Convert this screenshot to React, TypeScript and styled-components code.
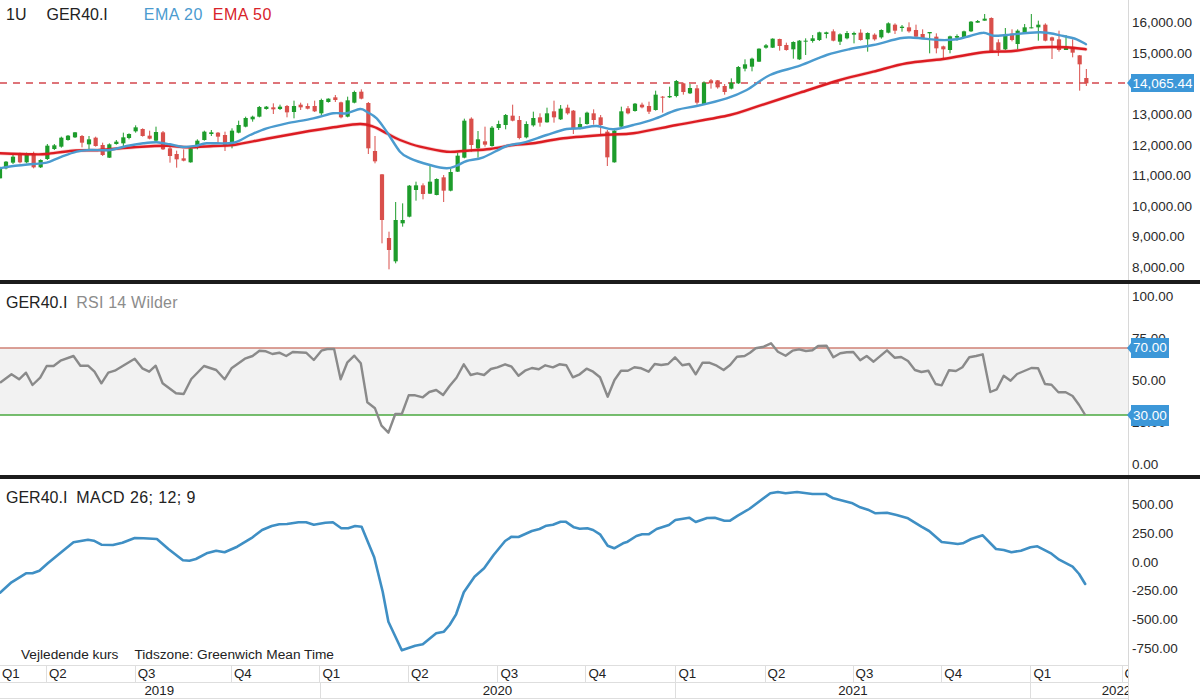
import React from "react";
import styled, { createGlobalStyle } from "styled-components";

const GlobalStyle = createGlobalStyle`
  html, body { margin: 0; padding: 0; background: #fff; }
  body { font-family: "Liberation Sans", Arial, sans-serif; color: #222; }
`;

const CHART_W = 1128;
const BLUE = "#4b9bcf";
const RED = "#dc1c22";
const UP = "#1d9c2b";
const DOWN = "#d94f4b";

type Pt = [number, number];
type Candle = [number, number, number, number, number, number];

// Candles read from the reference: x, rising?, wick top, body top, body bottom, wick bottom (at 3x)
const candleGroups: { off: number; rows: Candle[] }[] = [
  { off: 0, rows: [
    [0,1,500,505,535,535],[18,1,483,485,505,508],[39,1,465,470,488,492],[60,0,458,462,487,490],[80,1,458,462,487,490],[101,0,455,462,502,505],[122,1,478,480,502,504],[142,1,432,437,477,480],[163,1,432,436,447,450],[184,1,410,413,440,443],[204,1,405,407,420,422],[225,1,396,397,412,414],[246,0,405,408,428,442],[267,1,408,418,433,450],[287,0,410,413,438,440],[308,0,428,435,465,468],[328,1,430,433,473,474],[349,1,420,425,432,434],[370,1,398,412,430,438],[387,1,400,402,414,418],[407,1,376,382,394,398],[428,0,385,387,408,410],[449,0,392,407,416,418],[468,1,380,396,422,424],[489,0,393,397,448,450],[510,0,440,445,468,488],[530,0,452,462,478,503],[551,0,448,475,482,484],[572,1,442,445,487,488],[592,1,418,422,436,448],[613,1,392,395,420,422],[634,1,390,397,402,408],[654,0,396,398,410,432],[675,0,395,405,438,453],[696,1,385,392,427,445],[716,1,362,375,398,400],[737,1,350,354,380,382],[758,1,347,350,358,365],[778,1,318,321,350,352],[799,1,318,320,327,329],[820,0,310,322,328,342],[840,1,314,320,327,330],[861,0,315,318,337,352],[882,1,302,318,336,355],[902,0,308,314,322,330],[923,0,310,318,326,328],[944,0,302,318,334,336],[964,1,296,300,340,347],[985,1,295,296,306,308],[1006,0,285,292,300,306],[1023,0,305,307,352,355],[1043,1,290,301,350,352],[1063,1,272,276,308,310],[1084,0,268,275,296,298],[1105,0,306,309,445,462],[1125,0,408,453,484,490],[1146,0,522,523,660,730],[1167,0,695,714,750,808],[1187,1,606,660,784,790],
  ]},
  { off: 1200, rows: [
    [8,1,610,660,670,680],[28,1,555,557,650,652],[48,1,545,556,570,602],[69,0,550,556,582,598],[90,1,495,545,581,582],[110,1,535,537,585,586],[131,0,525,532,572,606],[152,1,505,516,572,574],[173,1,458,467,515,516],[193,1,356,362,473,475],[214,0,352,356,435,455],[234,1,393,418,445,473],[255,0,380,424,434,440],[276,1,378,383,438,440],[296,1,362,372,384,390],[317,1,342,345,375,388],[338,0,314,347,362,364],[358,0,348,360,414,418],[379,1,364,372,412,415],[400,1,335,354,376,380],[420,0,340,352,368,380],[441,1,323,340,367,368],[462,0,302,334,352,368],[482,1,315,326,358,360],[503,0,314,323,340,344],[520,0,330,332,388,402],[540,1,352,372,385,388],[561,1,335,338,372,374],[581,0,328,340,360,374],[602,0,345,352,375,402],[622,0,390,395,472,498],[643,1,390,392,487,488],[664,1,320,334,380,384],[684,0,318,325,340,343],[705,1,309,311,333,335],[726,0,308,314,322,325],[747,0,305,318,335,342],[767,1,272,284,330,332],[788,0,288,290,292,338],[809,1,260,288,292,294],[829,1,240,243,288,292],[850,0,248,250,276,284],[870,1,252,264,280,282],[891,0,255,265,308,314],[912,1,244,248,312,314],[933,0,237,241,250,266],[953,0,240,241,262,266],[974,0,252,258,276,284],[994,1,235,248,266,268],[1015,1,198,201,250,252],[1035,1,178,193,206,214],[1056,1,173,176,200,214],[1077,1,145,146,185,186],[1098,1,132,136,143,146],[1118,1,115,116,143,144],[1139,0,116,117,138,152],[1159,0,128,135,150,152],[1180,1,124,126,148,176],[1198,1,120,122,178,180],
  ]},
  { off: 2400, rows: [
    [17,1,115,122,125,165],[38,1,105,115,123,128],[58,1,95,97,120,123],[79,1,95,97,102,115],[100,0,88,94,122,124],[120,1,100,103,125,135],[141,1,93,99,115,118],[162,1,95,99,104,130],[182,0,88,98,120,122],[203,1,97,99,118,155],[224,0,100,104,118,122],[244,1,88,90,112,116],[265,1,67,70,98,100],[285,0,70,74,92,102],[306,1,75,80,84,95],[327,0,67,82,94,98],[348,0,74,90,110,113],[368,0,88,102,114,116],[389,1,96,96,100,160],[409,0,100,110,145,160],[430,0,137,139,148,176],[450,1,107,109,150,160],[471,1,103,108,113,122],[492,1,92,94,112,114],[513,1,63,65,94,96],[533,1,60,63,68,68],[554,1,42,56,62,62],[574,0,52,54,154,158],[595,0,118,127,150,168],[616,1,84,108,148,150],[636,0,88,101,120,124],[653,1,88,92,132,148],[674,1,72,82,98,100],[694,1,42,82,84,85],[715,1,62,74,82,122],[736,0,70,74,122,124],[756,0,110,112,122,177],[777,0,92,118,150,155],[798,1,105,142,150,150],[818,0,118,142,158,172],[839,0,165,166,193,272],[859,0,207,234,250,258],
  ]},
];

const ema20: Pt[] = [
  [0,505],[40,498],[100,492],[140,488],[180,472],[230,455],[270,450],[330,450],[380,438],[430,430],[470,427],[510,433],[550,441],[590,437],[620,430],[700,428],[750,405],[800,385],[860,370],[940,355],[1000,340],[1040,340],[1080,327],[1100,335],[1130,355],[1160,395],[1200,455],
  [1230,475],[1290,495],[1340,505],[1370,497],[1400,483],[1450,472],[1520,438],[1570,428],[1640,405],[1700,387],[1740,385],[1790,378],[1840,388],[1900,375],[1960,358],[2030,330],[2090,318],[2180,295],[2240,270],[2310,225],[2400,197],
  [2480,165],[2550,147],[2620,135],[2700,115],[2740,113],[2820,120],[2870,118],[2910,108],[2950,98],[2980,107],[3020,105],[3120,97],[3190,108],[3230,118],[3258,133],
];

const ema50: Pt[] = [
  [0,460],[100,463],[140,462],[220,452],[300,450],[400,442],[500,437],[560,442],[640,438],[700,435],[800,416],[900,398],[1000,382],[1080,372],[1120,380],[1160,400],[1200,420],
  [1260,440],[1340,455],[1400,452],[1470,447],[1540,435],[1600,430],[1690,415],[1820,404],[1900,400],[2030,375],[2190,345],[2270,320],[2400,278],
  [2520,240],[2620,215],[2720,190],[2830,177],[2950,157],[3040,153],[3120,142],[3200,142],[3257,148],
];

const rsiLeft: Pt[] = [[0,308],[30,283],[50,298],[68,278],[85,315],[105,293],[122,258],[140,258],[158,242],[192,228],[210,257],[230,257],[247,275],[265,310],[283,278],[300,272],[352,236],[372,265],[390,275],[407,257],[425,310],[460,340],[480,342],[500,297],[533,258],[565,270],[587,298],[605,265],[640,236],[660,228],[678,212],[695,214],[712,222],[730,218],[748,228],[765,216],[800,218],[820,240],[840,212],[855,207],[873,207],[890,298],[908,247],[926,227],[943,250],[960,367],[980,385],[997,437],[1015,458],[1033,402],[1050,402],[1068,346],[1085,346],[1105,352],[1122,336],[1140,330],[1158,345],[1175,318],[1193,293],[1212,253],[1230,285],[1247,280],[1265,285],[1283,267],[1300,262],[1320,253],[1337,260],[1355,287],[1372,272],[1390,264],[1408,268],[1425,256],[1445,262],[1462,253],[1480,256],[1497,292],[1515,283],[1533,266],[1550,275],[1568,292]];
const rsiRight: Pt[] = [[20,350],[38,300],[55,272],[73,272],[90,262],[108,265],[127,275],[143,252],[160,255],[178,252],[196,232],[215,256],[233,252],[250,283],[268,248],[285,248],[305,257],[323,270],[340,255],[358,230],[378,228],[392,218],[407,205],[428,200],[447,190],[465,215],[485,227],[503,212],[520,208],[538,213],[555,211],[570,198],[592,197],[610,232],[628,220],[645,217],[662,216],[680,241],[697,228],[715,245],[750,211],[770,233],[787,231],[805,243],[823,270],[840,276],[858,272],[877,312],[893,316],[912,271],[930,273],[947,262],[965,232],[983,228],[1000,223],[1020,336],[1037,328],[1055,287],[1073,302],[1090,282],[1127,264],[1145,265],[1163,312],[1180,314],[1198,337],[1217,337],[1235,348],[1252,375],[1268,405]];

const macdLeft: Pt[] = [[0,353],[30,322],[68,295],[85,295],[103,287],[125,265],[160,232],[192,202],[230,194],[245,197],[265,209],[295,210],[320,203],[352,189],[375,190],[410,192],[440,222],[478,256],[495,257],[512,252],[540,235],[565,227],[587,232],[620,215],[660,187],[685,165],[710,153],[730,148],[750,147],[780,142],[800,142],[820,149],[850,143],[870,142],[892,160],[910,160],[928,153],[945,155],[978,247],[1000,350],[1015,440],[1050,526],[1085,512],[1105,508],[1140,475],[1160,470],[1175,450],[1192,418],[1212,352],[1240,305],[1265,280],[1290,240],[1320,198],[1337,185],[1355,186],[1390,168],[1410,162],[1428,152],[1445,149],[1465,140],[1478,140],[1500,157],[1515,161],[1535,160],[1550,165],[1568,178]];
const macdRight: Pt[] = [[20,212],[37,220],[60,205],[72,200],[95,183],[110,178],[127,178],[148,162],[180,150],[197,135],[233,128],[250,141],[280,129],[300,128],[325,137],[340,137],[360,122],[390,102],[445,55],[465,51],[485,55],[515,51],[555,57],[590,57],[610,70],[660,85],[680,97],[700,104],[720,115],[750,113],[775,120],[805,130],[840,155],[860,168],[893,201],[915,204],[935,207],[948,205],[970,192],[1000,181],[1035,222],[1055,225],[1075,232],[1100,227],[1125,217],[1143,214],[1180,236],[1200,254],[1235,275],[1252,297],[1268,327]];

const ZX = 600 / 1568;
const fromCrops = (left: Pt[], right: Pt[], top: number): string =>
  [...left.map(([x, y]): Pt => [x * ZX, y / 3]), ...right.map(([x, y]): Pt => [600 + x * ZX, y / 3])]
    .map(([x, y]) => `${x.toFixed(1)},${(y + top).toFixed(1)}`)
    .join(" ");

// Catmull-Rom through the points, so the averages read as smooth curves
const smooth = (pts: Pt[]): string => {
  const p = pts.map(([x, y]): Pt => [x / 3, y / 3]);
  let d = `M${p[0][0].toFixed(1)} ${p[0][1].toFixed(1)}`;
  for (let i = 0; i < p.length - 1; i++) {
    const a = p[Math.max(i - 1, 0)], b = p[i], c = p[i + 1], e = p[Math.min(i + 2, p.length - 1)];
    d += `C${(b[0] + (c[0] - a[0]) / 6).toFixed(1)} ${(b[1] + (c[1] - a[1]) / 6).toFixed(1)} ${(c[0] - (e[0] - b[0]) / 6).toFixed(1)} ${(c[1] - (e[1] - b[1]) / 6).toFixed(1)} ${c[0].toFixed(1)} ${c[1].toFixed(1)}`;
  }
  return d;
};

const Page = styled.div`
  width: 1200px;
  height: 700px;
  display: flex;
  flex-direction: column;
  overflow: hidden;
  background: #fff;
`;

const Pane = styled.section<{ $h: number }>`
  height: ${(p) => p.$h}px;
  flex: none;
  display: flex;
`;

const Divider = styled.div`
  height: 4px;
  flex: none;
  background: #1c1c1c;
`;

const ChartArea = styled.div`
  position: relative;
  width: ${CHART_W}px;
  flex: none;
  display: flex;
  flex-direction: column;
`;

const Plot = styled.svg`
  display: block;
  flex: 1;
  width: ${CHART_W}px;
  min-height: 0;
  overflow: hidden;
`;

const Legend = styled.div<{ $top: number }>`
  position: absolute;
  left: 6px;
  top: ${(p) => p.$top}px;
  display: flex;
  align-items: center;
  font-size: 16px;
  line-height: 18px;
  white-space: nowrap;
  pointer-events: none;
`;

const LegendItem = styled.span<{ $color?: string; $gap?: number; $track?: number }>`
  color: ${(p) => p.$color ?? "#222"};
  margin-right: ${(p) => p.$gap ?? 0}px;
  letter-spacing: ${(p) => p.$track ?? 0}px;
`;

const Axis = styled.div<{ $pt: number; $pb: number }>`
  position: relative;
  flex: 1;
  display: flex;
  flex-direction: column;
  justify-content: space-between;
  padding: ${(p) => p.$pt}px 0 ${(p) => p.$pb}px 3px;
  border-left: 1px solid #d8d8d8;
`;

const Tick = styled.div`
  font-size: 13.5px;
  line-height: 16px;
  height: 16px;
  color: #2a2a2a;
  white-space: nowrap;
`;

const PriceTag = styled.div<{ $top: number; $w: number; $h: number }>`
  position: absolute;
  left: 2px;
  top: ${(p) => p.$top}px;
  width: ${(p) => p.$w}px;
  height: ${(p) => p.$h}px;
  display: flex;
  align-items: center;
  justify-content: center;
  background: #3c97d8;
  color: #fff;
  font-size: 13.5px;
  white-space: nowrap;

  &::before {
    content: "";
    position: absolute;
    left: -4px;
    top: 50%;
    margin-top: -5px;
    border-top: 5px solid transparent;
    border-bottom: 5px solid transparent;
    border-right: 4px solid #3c97d8;
  }
`;

const Footnote = styled.div`
  position: absolute;
  left: 21px;
  top: 168px;
  display: flex;
  gap: 16px;
  font-size: 13.7px;
  line-height: 16px;
  color: #222;
  white-space: nowrap;
`;

const TimeAxis = styled.div`
  flex: none;
  box-sizing: border-box;
  height: 34px;
  margin-bottom: 1px;
  display: flex;
  flex-direction: column;
  border-top: 1px solid #dedede;
  border-bottom: 1px solid #dedede;
  overflow: hidden;
`;

const TimeRow = styled.div`
  flex: 1;
  display: flex;
  min-height: 0;

  & + & {
    border-top: 1px solid #dedede;
  }
`;

const TimeCell = styled.div<{ $w: number; $center?: boolean; $first?: boolean }>`
  flex: none;
  width: ${(p) => p.$w}px;
  box-sizing: border-box;
  padding: ${(p) => (p.$center ? "0 1px 0 0" : "0 0 0 2px")};
  border-left: ${(p) => (p.$first ? "0" : "1px solid #dedede")};
  font-size: 13.3px;
  line-height: 16px;
  color: #222;
  text-align: ${(p) => (p.$center ? "center" : "left")};
  white-space: nowrap;
`;

const Candles = () => (
  <g>
    {candleGroups.flatMap(({ off, rows }) =>
      rows.map(([x, rising, wt, bt, bb, wb]) => {
        const cx = (x + off) / 3;
        const color = rising ? UP : DOWN;
        return (
          <g key={x + off}>
            <line x1={cx} x2={cx} y1={wt / 3} y2={wb / 3} stroke={color} strokeWidth={1} />
            <rect x={cx - 2.1} y={bt / 3} width={4.2} height={Math.max((bb - bt) / 3, 1)} fill={color} />
          </g>
        );
      })
    )}
  </g>
);

const PriceChart = () => (
  <Plot viewBox={`0 0 ${CHART_W} 280`} aria-hidden>
    <line x1={0} x2={CHART_W} y1={83} y2={83} stroke="#d4474e" strokeWidth={1.3} strokeDasharray="7 6" />
    <Candles />
    <path d={smooth(ema50)} fill="none" stroke={RED} strokeOpacity={0.2} strokeWidth={3.8} strokeLinecap="round" />
    <path d={smooth(ema50)} fill="none" stroke={RED} strokeWidth={2.4} strokeLinecap="round" />
    <path d={smooth(ema20)} fill="none" stroke={BLUE} strokeWidth={2.4} strokeLinecap="round" />
  </Plot>
);

const RsiChart = () => (
  <Plot viewBox={`0 0 ${CHART_W} 191`} aria-hidden>
    <rect x={0} y={64} width={CHART_W} height={67} fill="#f2f2f2" />
    <line x1={0} x2={CHART_W} y1={64} y2={64} stroke="#cf8174" strokeWidth={1.4} />
    <line x1={0} x2={CHART_W} y1={131} y2={131} stroke="#4aa83f" strokeWidth={1.4} />
    <polyline
      points={fromCrops(rsiLeft, rsiRight, -4)}
      fill="none"
      stroke="#8a8a8a"
      strokeWidth={2.4}
      strokeLinejoin="round"
    />
  </Plot>
);

const MacdChart = () => (
  <Plot viewBox={`0 0 ${CHART_W} 186`} aria-hidden>
    <polyline
      points={fromCrops(macdLeft, macdRight, -4)}
      fill="none"
      stroke="#3f8fc4"
      strokeWidth={2.6}
      strokeLinejoin="round"
      strokeLinecap="round"
    />
  </Plot>
);

const quarters: [string, number][] = [
  ["Q1", 46], ["Q2", 88.7], ["Q3", 96.3], ["Q4", 88.5], ["Q1", 88.5], ["Q2", 89.5], ["Q3", 88],
  ["Q4", 89.9], ["Q1", 89.2], ["Q2", 88], ["Q3", 88.8], ["Q4", 89.1], ["Q1", 91.1], ["Q2", 40],
];
const years: [string, number][] = [["2019", 319.5], ["2020", 355.9], ["2021", 355.1], ["2022", 172]];

const priceTicks = ["16,000.00", "15,000.00", "14,000.00", "13,000.00", "12,000.00", "11,000.00", "10,000.00", "9,000.00", "8,000.00"];
const rsiTicks = ["100.00", "75.00", "50.00", "25.00", "0.00"];
const macdTicks = ["500.00", "250.00", "0.00", "-250.00", "-500.00", "-750.00"];

export default function App() {
  return (
    <Page>
      <GlobalStyle />
      <Pane $h={280}>
        <ChartArea>
          <PriceChart />
          <Legend $top={6}>
            <LegendItem $gap={20}>1U</LegendItem>
            <LegendItem $gap={36}>GER40.I</LegendItem>
            <LegendItem $color="#4b9bcf" $gap={10} $track={0.5}>EMA 20</LegendItem>
            <LegendItem $color="#d8232a" $track={0.5}>EMA 50</LegendItem>
          </Legend>
        </ChartArea>
        <Axis $pt={15} $pb={4}>
          {priceTicks.map((t) => <Tick key={t}>{t}</Tick>)}
          <PriceTag $top={74} $w={63} $h={18}>14,065.44</PriceTag>
        </Axis>
      </Pane>
      <Divider />
      <Pane $h={191}>
        <ChartArea>
          <RsiChart />
          <Legend $top={10}>
            <LegendItem $gap={9}>GER40.I</LegendItem>
            <LegendItem $color="#8c8c8c" $track={0.2}>RSI 14 Wilder</LegendItem>
          </Legend>
        </ChartArea>
        <Axis $pt={5} $pb={2}>
          {rsiTicks.map((t) => <Tick key={t}>{t}</Tick>)}
          <PriceTag $top={53.5} $w={38} $h={20.5}>70.00</PriceTag>
          <PriceTag $top={121} $w={38} $h={20.5}>30.00</PriceTag>
        </Axis>
      </Pane>
      <Divider />
      <Pane $h={221}>
        <ChartArea>
          <MacdChart />
          <Legend $top={10}>
            <LegendItem $gap={9}>GER40.I</LegendItem>
            <LegendItem $track={0.4}>MACD 26; 12; 9</LegendItem>
          </Legend>
          <Footnote>
            <span>Vejledende kurs</span>
            <span>Tidszone: Greenwich Mean Time</span>
          </Footnote>
          <TimeAxis>
            <TimeRow>
              {quarters.map(([q, w], i) => <TimeCell key={i} $w={w} $first={i === 0}>{q}</TimeCell>)}
            </TimeRow>
            <TimeRow>
              {years.map(([y, w], i) => <TimeCell key={y} $w={w} $first={i === 0} $center>{y}</TimeCell>)}
            </TimeRow>
          </TimeAxis>
        </ChartArea>
        <Axis $pt={18} $pb={43}>
          {macdTicks.map((t) => <Tick key={t}>{t}</Tick>)}
        </Axis>
      </Pane>
    </Page>
  );
}
